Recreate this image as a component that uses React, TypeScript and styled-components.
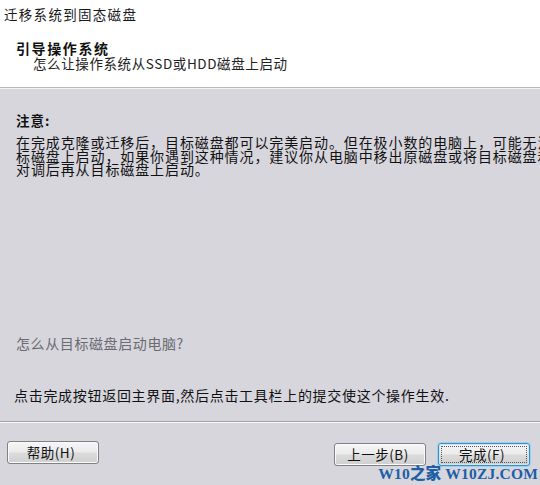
import React from 'react';
import styled, { createGlobalStyle } from 'styled-components';

const GlobalStyle = createGlobalStyle`
  html, body {
    margin: 0;
    padding: 0;
    background: #d7d6dd;
  }
  body {
    font-family: "Noto Sans CJK SC", "Liberation Sans", sans-serif;
  }
`;

const Window = styled.div`
  position: relative;
  width: 540px;
  height: 485px;
  display: flex;
  flex-direction: column;
  overflow: hidden;
  background: #d7d6dd;
  color: #111;
`;

const Header = styled.div`
  height: 88px;
  background: #ffffff;
  border-bottom: 1px solid #b9b8be;
  box-shadow: 0 1px 0 #f4f4f6;
  padding: 6px 0 0 4px;
  box-sizing: border-box;
`;

const WindowTitle = styled.div`
  font-size: 13.5px;
  line-height: 16px;
  letter-spacing: 1.3px;
  color: #1a1a1a;
`;

const StepTitle = styled.div`
  margin: 18px 0 0 12px;
  font-size: 14px;
  font-weight: 700;
  line-height: 16px;
  letter-spacing: 1.6px;
`;

const StepSubtitle = styled.div`
  margin: -1px 0 0 29px;
  font-size: 13.5px;
  line-height: 16px;
  letter-spacing: 0.6px;
  color: #222;
`;

const Body = styled.div`
  flex: 1;
  display: flex;
  flex-direction: column;
  padding: 22px 0 0 16px;
  margin-top: 2px;
`;

const Label = styled.div`
  font-size: 13.5px;
  font-weight: 700;
  line-height: 16px;
  letter-spacing: 1px;
`;

const Paragraph = styled.div`
  margin-top: 8px;
  font-size: 14px;
  line-height: 13.5px;
  letter-spacing: 0.9px;
  white-space: nowrap;
`;

const Spacer = styled.div`
  flex: 1;
`;

const Question = styled.div`
  font-size: 14px;
  line-height: 16px;
  letter-spacing: 0.6px;
  color: #6a6a70;
`;

const Hint = styled.div`
  margin: 36px 0 18px -2px;
  font-size: 14px;
  line-height: 16px;
  letter-spacing: 0.7px;
  white-space: nowrap;
`;

const Footer = styled.div`
  height: 64px;
  border-top: 1px solid #a2a1a8;
  box-shadow: inset 0 1px 0 #fbfbfc;
  box-sizing: border-box;
  display: flex;
  align-items: flex-start;
  padding: 19px 10px 0 7px;
`;

const Button = styled.button<{ $focused?: boolean }>`
  position: relative;
  width: 92px;
  height: 23px;
  border-radius: 3px;
  border: 1px solid ${p => (p.$focused ? '#3e8fc0' : '#7f7f84')};
  box-shadow: ${p => (p.$focused ? '0 0 0 1px #9cd0ee, inset 0 0 0 1px #c9e7f8' : 'inset 0 0 0 1px #fbfbfb')};
  background: linear-gradient(#f6f6f6 0%, #ebebeb 48%, #dcdcdc 52%, #cfcfcf 100%);
  font-family: "Noto Sans CJK SC", "Liberation Sans", sans-serif;
  font-size: 13.5px;
  letter-spacing: 0.5px;
  line-height: 19px;
  color: #111;
  padding: 0 4px 0 0;
  text-align: center;
  &::after {
    content: '';
    display: ${p => (p.$focused ? 'block' : 'none')};
    position: absolute;
    inset: 2px;
    border: 1px dotted #555;
  }
`;

const LeftGroup = styled.div`
  flex: 1;
  display: flex;
`;

const RightGroup = styled.div`
  display: flex;
  gap: 12px;
  margin-top: 2px;
`;

const Watermark = styled.div`
  position: absolute;
  right: 2px;
  bottom: 3px;
  font-family: "Liberation Serif", "Noto Sans CJK SC", serif;
  font-weight: 700;
  font-size: 15.5px;
  line-height: 16px;
  color: #1d5fa6;
  letter-spacing: 0.2px;
  white-space: nowrap;
`;

const WatermarkCjk = styled.span`
  font-family: "Noto Sans CJK SC", serif;
  font-weight: 900;
`;

const lines = [
  '在完成克隆或迁移后，目标磁盘都可以完美启动。但在极小数的电脑上，可能无法从目',
  '标磁盘上启动，如果你遇到这种情况，建议你从电脑中移出原磁盘或将目标磁盘和原磁盘',
  '对调后再从目标磁盘上启动。',
];

export default function App() {
  return (
    <Window>
      <GlobalStyle />
      <Header>
        <WindowTitle>迁移系统到固态磁盘</WindowTitle>
        <StepTitle>引导操作系统</StepTitle>
        <StepSubtitle>怎么让操作系统从SSD或HDD磁盘上启动</StepSubtitle>
      </Header>
      <Body>
        <Label>注意:</Label>
        <Paragraph>
          {lines.map(l => (
            <div key={l}>{l}</div>
          ))}
        </Paragraph>
        <Spacer />
        <Question>怎么从目标磁盘启动电脑?</Question>
        <Hint>点击完成按钮返回主界面,然后点击工具栏上的提交使这个操作生效.</Hint>
      </Body>
      <Footer>
        <LeftGroup>
          <Button>帮助(H)</Button>
        </LeftGroup>
        <RightGroup>
          <Button>上一步(B)</Button>
          <Button $focused>完成(F)</Button>
        </RightGroup>
      </Footer>
      <Watermark>
        W10<WatermarkCjk>之家</WatermarkCjk> W10ZJ.COM
      </Watermark>
    </Window>
  );
}
